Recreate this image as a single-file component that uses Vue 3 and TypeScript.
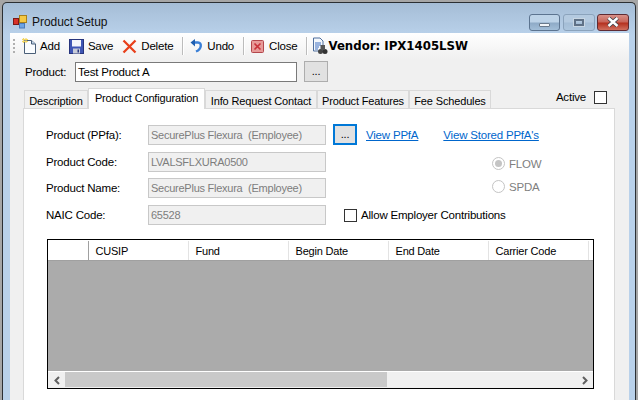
<script setup lang="ts">
const tabs = [
  { label: 'Description', width: 64 },
  { label: 'Product Configuration', width: 117, active: true },
  { label: 'Info Request Contact', width: 112 },
  { label: 'Product Features', width: 92 },
  { label: 'Fee Schedules', width: 82 },
]
const fields = [
  { label: 'Product (PPfa):', value: 'SecurePlus Flexura  (Employee)' },
  { label: 'Product Code:', value: 'LVALSFLXURA0500' },
  { label: 'Product Name:', value: 'SecurePlus Flexura  (Employee)' },
  { label: 'NAIC Code:', value: '65528' },
]
const columns = ['CUSIP', 'Fund', 'Begin Date', 'End Date', 'Carrier Code']
</script>

<template>
  <div class="desktop">
    <div class="window">
      <header class="titlebar">
        <svg class="app-icon" width="16" height="16" viewBox="0 0 16 16">
          <rect x="6.5" y="1.5" width="7" height="7" fill="#f5c842" stroke="#a8801c" />
          <rect x="0.5" y="4.5" width="5" height="6" fill="#d8322a" stroke="#7a1a18" />
          <rect x="6.5" y="9.5" width="5" height="4.5" fill="#6ea4e4" stroke="#4a7ab8" />
        </svg>
        <span class="title">Product Setup</span>
        <div class="caption-buttons">
          <div class="cap cap-min"><span class="min-glyph"></span></div>
          <div class="cap cap-max"><span class="max-glyph"></span></div>
          <div class="cap cap-close">
            <svg width="14" height="10" viewBox="0 0 14 10">
              <path d="M2.5 1 L11.5 9 M11.5 1 L2.5 9" stroke="#39424c" stroke-width="4" />
              <path d="M2.5 1 L11.5 9 M11.5 1 L2.5 9" stroke="#fff" stroke-width="2.4" />
            </svg>
          </div>
        </div>
      </header>

      <div class="client">
        <div class="toolbar">
          <div class="grip"><i></i><i></i><i></i><i></i></div>
          <button class="tool tool-add">
            <svg width="15" height="16" viewBox="0 0 15 16">
              <path d="M2.5 2.5 H9.5 L13.5 6 V15.5 H2.5 Z" fill="#fbfdff" stroke="#4a5f78" />
              <path d="M9.5 2.5 V6 H13.5" fill="#c6d8ea" stroke="#4a5f78" />
              <path d="M0 1.5 H6 M0 3.5 H6 M1.5 0 V5 M4 0 V5" stroke="#f3d765" stroke-width="1.2" />
            </svg>
            <span>Add</span>
          </button>
          <button class="tool tool-save">
            <svg width="15" height="15" viewBox="0 0 15 15">
              <rect x="0.5" y="0.5" width="14" height="14" fill="#3f56b4" stroke="#27357d" />
              <rect x="3" y="1" width="9" height="6.5" fill="#f4f6fb" />
              <rect x="4" y="9.5" width="7" height="5" fill="#c8ccd8" />
              <rect x="8.5" y="10.5" width="1.5" height="3" fill="#27357d" />
            </svg>
            <span>Save</span>
          </button>
          <button class="tool tool-delete">
            <svg width="15" height="15" viewBox="0 0 15 15">
              <path d="M1.5 1.5 L13.5 13.5 M13.5 1.5 L1.5 13.5" stroke="#e8401c" stroke-width="2.3" />
            </svg>
            <span>Delete</span>
          </button>
          <div class="sep"></div>
          <button class="tool tool-undo">
            <svg width="13" height="14" viewBox="0 0 13 14">
              <path d="M4 3.5 H8 C12 3.5 12 10 6 12.5" fill="none" stroke="#3a7fd6" stroke-width="2.4" />
              <path d="M0.5 3.5 L5 0 V7.5 Z" fill="#1f5fb0" />
            </svg>
            <span>Undo</span>
          </button>
          <div class="sep"></div>
          <button class="tool tool-close">
            <svg width="13" height="13" viewBox="0 0 13 13">
              <rect x="0.5" y="0.5" width="12" height="12" rx="1" fill="#e79a98" stroke="#b2474c" />
              <path d="M3.5 3.5 L9.5 9.5 M9.5 3.5 L3.5 9.5" stroke="#c8323a" stroke-width="1.6" />
            </svg>
            <span>Close</span>
          </button>
          <div class="sep"></div>
          <div class="vendor">
            <svg width="16" height="18" viewBox="0 0 16 18">
              <path d="M1.5 1 H8 L11 4 V14 H1.5 Z" fill="#f4f8fc" stroke="#4f6f9e" />
              <path d="M3 6 H9 M3 8 H9 M3 10 H7 M3 12 H6" stroke="#3f6ec0" />
              <circle cx="8.5" cy="14.5" r="2.5" fill="#444" />
              <circle cx="13" cy="14.5" r="2.5" fill="#333" />
              <rect x="8.5" y="8" width="4.5" height="5" fill="#555" />
            </svg>
            <b>Vendor: IPX1405LSW</b>
          </div>
        </div>

        <div class="product-row">
          <label class="product-label">Product:</label>
          <div class="product-input">Test Product A</div>
          <div class="dots-btn">...</div>
        </div>

        <div class="tab-strip">
          <div
            v-for="tab in tabs"
            :key="tab.label"
            class="tab"
            :class="{ active: tab.active }"
            :style="{ width: tab.width + 'px' }"
          >{{ tab.label }}</div>
          <div class="active-toggle">
            <span>Active</span>
            <span class="check"></span>
          </div>
        </div>

        <section class="page">
          <div class="form-area">
            <div class="fields">
              <div v-for="field in fields" :key="field.label" class="field">
                <label>{{ field.label }}</label>
                <div class="readonly">{{ field.value }}</div>
              </div>
            </div>
            <div class="side">
              <div class="links">
                <div class="dots-btn focused">...</div>
                <a class="link link-a">View PPfA</a>
                <a class="link">View Stored PPfA's</a>
              </div>
              <div class="options">
                <div class="radio-row"><span class="radio on"></span>FLOW</div>
                <div class="radio-row"><span class="radio"></span>SPDA</div>
              </div>
              <div class="allow"><span class="check"></span>Allow Employer Contributions</div>
            </div>
          </div>

          <div class="grid">
            <div class="grid-head">
              <div class="row-head"></div>
              <div v-for="col in columns" :key="col" class="col">{{ col }}</div>
            </div>
            <div class="grid-body"></div>
            <div class="hscroll">
              <div class="arrow">
                <svg width="8" height="9" viewBox="0 0 8 9"><path d="M6 1 L2.5 4.5 L6 8" fill="none" stroke="#606060" stroke-width="2" /></svg>
              </div>
              <div class="track"><div class="thumb"></div></div>
              <div class="arrow">
                <svg width="8" height="9" viewBox="0 0 8 9"><path d="M2 1 L5.5 4.5 L2 8" fill="none" stroke="#606060" stroke-width="2" /></svg>
              </div>
            </div>
          </div>
        </section>
      </div>
    </div>
  </div>
</template>

<style>
html, body { margin: 0; padding: 0; overflow: hidden; }
</style>

<style scoped>
.desktop {
  width: 638px;
  height: 400px;
  overflow: hidden;
  background: #a6a6a6;
  padding: 2px 0 0 2px;
  box-sizing: border-box;
  font-family: "Liberation Sans", Arial, sans-serif;
  font-size: 11.5px;
  letter-spacing: -0.2px;
  color: #000;
}
.window {
  width: 634px;
  height: 420px;
  box-sizing: border-box;
  border: 1px solid #2b2f33;
  border-bottom: 0;
  border-radius: 5px 5px 0 0;
  background: linear-gradient(#a5bdd6 0, #b9d1ea 32px);
  padding: 0 6px 0 7px;
  display: flex;
  flex-direction: column;
}
.titlebar {
  height: 30px;
  flex: none;
  display: flex;
  align-items: center;
  position: relative;
  margin: 0 -6px 0 -7px;
  padding-left: 10px;
  box-sizing: border-box;
}
.app-icon { margin-right: 3px; margin-top: 7px; }
.title { font-size: 12px; letter-spacing: -0.05px; margin-top: 7px; color: #111; }
.caption-buttons {
  margin-left: auto;
  margin-right: 6px;
  margin-top: 8px;
  display: flex;
  align-items: flex-start;
}
.cap {
  height: 17px;
  box-sizing: border-box;
  border: 1px solid #5c7490;
  border-radius: 3px;
  display: flex;
  align-items: center;
  justify-content: center;
}
.cap-min {
  width: 31px;
  margin-right: 3px;
  background: linear-gradient(#bdd3e8 0 48%, #8eaac6 52%, #a2bed8 100%);
  align-items: flex-end;
  padding-bottom: 3px;
}
.min-glyph { width: 9px; height: 2px; background: #f2f5f8; border: 1px solid #6a7a8c; border-radius: 1px; }
.cap-max {
  width: 32px;
  margin-right: 2px;
  background: linear-gradient(#b4cae0 0 48%, #a4bdd6 52%, #adc6de 100%);
  border-color: #8ba3bc;
}
.max-glyph { width: 6px; height: 3px; border: 2px solid #5f7186; outline: 1px solid #c8d6e3; }
.cap-close {
  width: 32px;
  background: linear-gradient(#d89088 0, #c8655a 46%, #b5301f 54%, #d0705f 100%);
  border-color: #5f2b33;
}
.client {
  width: 619px;
  flex: 1;
  background: #f0f0f0;
  display: flex;
  flex-direction: column;
}
.toolbar {
  height: 26px;
  flex: none;
  display: flex;
  align-items: center;
  background: linear-gradient(#ffffff, #f0f0f0);
  padding-left: 3px;
  box-sizing: border-box;
}
.grip { width: 3px; display: flex; flex-direction: column; gap: 2px; margin-right: 6px; }
.grip i { display: block; width: 2px; height: 2px; background: #b0b0b0; }
.tool {
  display: flex;
  align-items: center;
  gap: 4px;
  border: 0;
  padding: 0;
  background: none;
  font: inherit;
  letter-spacing: inherit;
  color: #000;
  white-space: nowrap;
}
.tool-add { margin-right: 9px; gap: 3px; }
.tool-save { margin-right: 9px; }
.tool-delete { margin-right: 9px; }
.sep { width: 1px; height: 18px; background: #bcbcbc; margin-right: 7px; box-shadow: 1px 0 0 #fff; }
.tool-undo { margin-right: 9px; }
.tool-close { margin-right: 9px; gap: 5px; }
.vendor { display: flex; align-items: center; margin-left: -2px; }
.vendor b { font-family: "DejaVu Sans", sans-serif; font-size: 11.75px; font-weight: 700; letter-spacing: 0; }
.product-row {
  height: 23px;
  flex: none;
  display: flex;
  align-items: center;
  margin-top: 1px;
  padding-left: 15px;
}
.product-label { width: 50px; }
.product-input {
  width: 222px;
  height: 20px;
  box-sizing: border-box;
  border: 1px solid #7a7a7a;
  background: #fff;
  padding-left: 2px;
  line-height: 18px;
  margin-right: 7px;
}
.dots-btn {
  width: 24px;
  height: 21px;
  box-sizing: border-box;
  background: #e1e1e1;
  border: 1px solid #adadad;
  text-align: center;
  line-height: 18px;
  font-size: 11px;
}
.dots-btn.focused { border: 2px solid #0078d7; line-height: 16px; }
.tab-strip {
  height: 26px;
  flex: none;
  display: flex;
  align-items: flex-end;
  padding-left: 14px;
  position: relative;
  z-index: 1;
  margin-bottom: -1px;
}
.tab {
  height: 18px;
  box-sizing: border-box;
  border: 1px solid #d9d9d9;
  border-bottom: 0;
  text-align: center;
  line-height: 20px;
  font-size: 11px;
  letter-spacing: -0.15px;
  background: #f0f0f0;
  white-space: nowrap;
  margin-bottom: 1px;
}
.tab.active {
  height: 21px;
  background: #fff;
  line-height: 18px;
  margin-bottom: 0;
}
.active-toggle {
  margin-left: auto;
  margin-right: 22px;
  display: flex;
  align-items: center;
  gap: 8px;
  height: 24px;
}
.check {
  display: block;
  width: 13px;
  height: 13px;
  box-sizing: border-box;
  border: 1px solid #333;
  background: #fff;
  flex: none;
}
.page {
  width: 592px;
  margin-left: 13px;
  flex: 1;
  background: #fff;
  border: 1px solid #d9d9d9;
  box-sizing: border-box;
  padding: 16px 0 0 22px;
}
.form-area { display: flex; height: 115px; }
.fields { width: 280px; flex: none; display: flex; flex-direction: column; }
.field { display: flex; align-items: center; height: 20px; margin-bottom: 6.5px; }
.field label { width: 102px; flex: none; }
.readonly {
  width: 178px;
  height: 20px;
  box-sizing: border-box;
  background: #f0f0f0;
  border: 1px solid #c8c8c8;
  color: #7d7d7d;
  padding-left: 2px;
  font-size: 11px;
  letter-spacing: -0.25px;
  line-height: 18px;
  white-space: pre;
}
.side { margin-left: 7px; flex: 1; display: flex; flex-direction: column; }
.links { display: flex; align-items: center; height: 21px; margin-top: -1px; }
.link { color: #0066cc; text-decoration: underline; margin-left: 25px; }
.link-a { margin-left: 9px; }
.options { margin-left: 159px; margin-top: 12px; display: flex; flex-direction: column; gap: 10px; color: #808080; }
.radio-row { display: flex; align-items: center; gap: 4px; height: 13px; }
.radio {
  width: 13px;
  height: 13px;
  box-sizing: border-box;
  border-radius: 50%;
  border: 1px solid #c4c4c4;
  background: #fff;
  position: relative;
}
.radio.on::after {
  content: "";
  position: absolute;
  inset: 2px;
  border-radius: 50%;
  background: #c4c4c4;
}
.allow { display: flex; align-items: center; gap: 4px; margin-left: 11px; margin-top: 15px; height: 14px; }
.grid {
  width: 547px;
  height: 150px;
  box-sizing: border-box;
  border: 1px solid #000;
  display: flex;
  flex-direction: column;
  margin: -1px 0 0 1px;
}
.grid-head {
  height: 21px;
  flex: none;
  display: flex;
  background: #fff;
  padding-top: 1px;
  box-sizing: border-box;
  border-bottom: 1px solid #a0a0a0;
}
.row-head { width: 40px; flex: none; border-right: 1px solid #a0a0a0; }
.col {
  width: 100px;
  flex: none;
  box-sizing: border-box;
  border-right: 1px solid #e3e3e3;
  padding-left: 6.5px;
  font-size: 11px;
  letter-spacing: -0.2px;
  line-height: 20px;
  white-space: nowrap;
}
.grid-body { flex: 1; background: #ababab; }
.hscroll { height: 17px; flex: none; display: flex; background: #f0f0f0; border-top: 1px solid #fff; box-sizing: border-box; }
.arrow { width: 17px; flex: none; display: flex; align-items: center; justify-content: center; }
.track { flex: 1; }
.thumb { width: 322px; height: 15px; background: #c9c9c9; }
</style>
